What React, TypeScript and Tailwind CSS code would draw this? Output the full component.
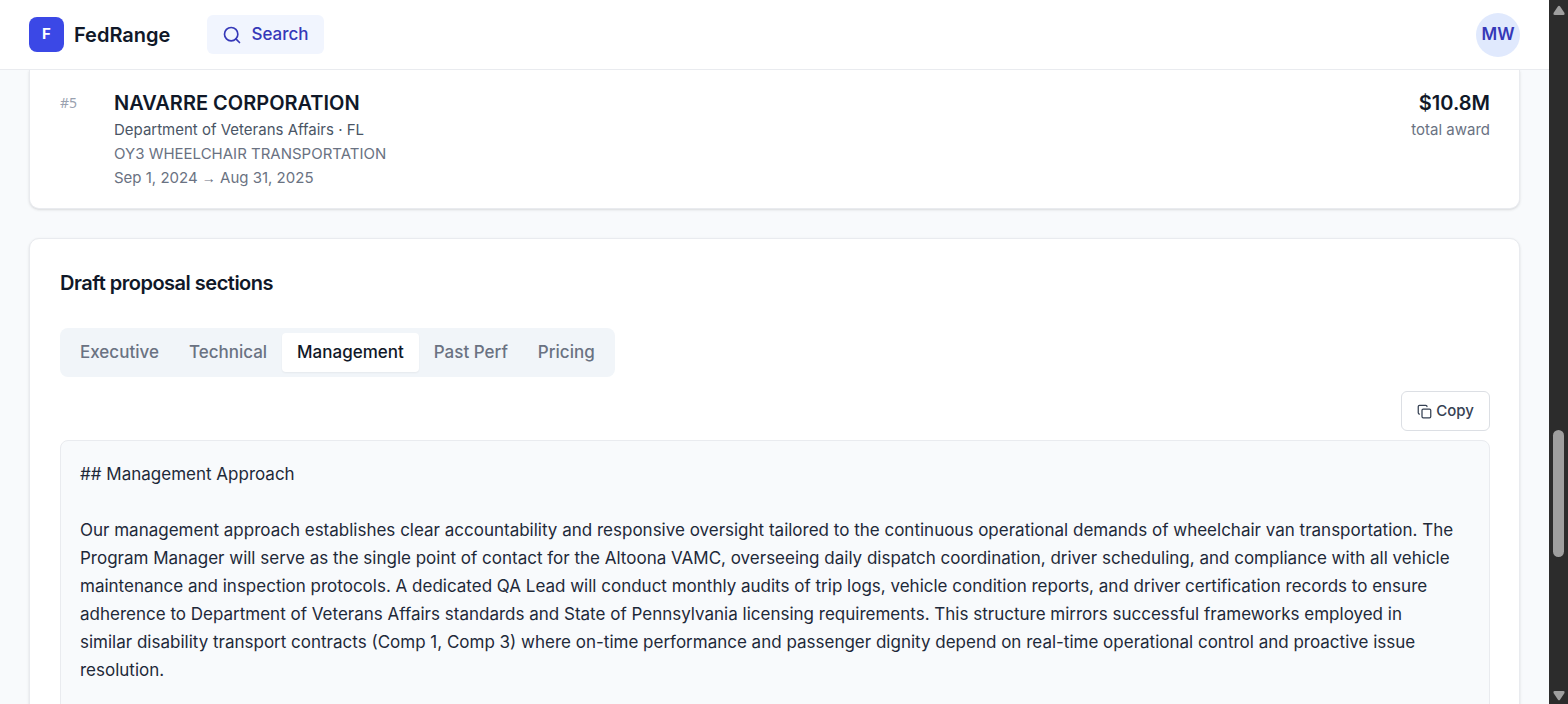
import { Copy, Search } from 'lucide-react';

const tabs = ['Executive', 'Technical', 'Management', 'Past Perf', 'Pricing'];
const activeTab = 'Management';

const draft = `## Management Approach

Our management approach establishes clear accountability and responsive oversight tailored to the continuous operational demands of wheelchair van transportation. The Program Manager will serve as the single point of contact for the Altoona VAMC, overseeing daily dispatch coordination, driver scheduling, and compliance with all vehicle maintenance and inspection protocols. A dedicated QA Lead will conduct monthly audits of trip logs, vehicle condition reports, and driver certification records to ensure adherence to Department of Veterans Affairs standards and State of Pennsylvania licensing requirements. This structure mirrors successful frameworks employed in similar disability transport contracts (Comp 1, Comp 3) where on-time performance and passenger dignity depend on real-time operational control and proactive issue resolution.`;

function Header() {
  return (
    <header className="flex h-[70px] shrink-0 items-center border-b border-[#e9ebef] bg-white px-[29px]">
      <a href="#home" className="flex items-center gap-2.5">
        <span className="flex size-[35px] items-center justify-center rounded-lg bg-[#3b48e6] text-[15px] font-bold text-white">
          F
        </span>
        <span className="text-xl leading-[26px] font-semibold text-gray-900">FedRange</span>
      </a>
      <nav className="ml-[37px]">
        <a
          href="#search"
          className="flex h-[39px] items-center gap-[9px] rounded-md bg-[#f1f5fe] px-[15px] text-[17px] font-medium text-[#3538b8]"
        >
          <Search className="size-5" strokeWidth={2} />
          Search
        </a>
      </nav>
      <button
        type="button"
        className="ml-auto flex size-11 items-center justify-center rounded-full bg-[#e0e9fd] text-[17px] font-semibold text-[#3538b8]"
      >
        MW
      </button>
    </header>
  );
}

function AwardCard() {
  return (
    <section className="flex rounded-b-[10px] border border-t-0 border-[#e9ebef] bg-white pt-5 pr-[29px] pb-[18px] pl-[30px] shadow-sm">
      <span className="w-[54px] shrink-0 pt-[3px] font-['Noto_Sans'] text-sm text-gray-400">#5</span>
      <div className="min-w-0 flex-1">
        <h3 className="text-xl leading-[26px] font-semibold text-gray-900">NAVARRE CORPORATION</h3>
        <p className="pt-0.5 text-[15px] leading-6 text-gray-600">Department of Veterans Affairs · FL</p>
        <p className="text-[15px] leading-6 text-gray-500">OY3 WHEELCHAIR TRANSPORTATION</p>
        <p className="text-[15px] leading-6 text-gray-500">
          Sep 1, 2024 <span className="font-['Liberation_Sans'] text-sm">→</span> Aug 31, 2025
        </p>
      </div>
      <div className="text-right">
        <p className="text-xl leading-[26px] font-semibold text-gray-900">$10.8M</p>
        <p className="pt-0.5 text-[15px] leading-6 text-gray-500">total award</p>
      </div>
    </section>
  );
}

function DraftSections() {
  return (
    <section className="rounded-[10px] border border-[#e9ebef] bg-white pt-[29px] pr-[29px] pb-[29px] pl-[30px] shadow-sm">
      <h2 className="text-xl leading-[30px] font-semibold tracking-tight text-gray-900">Draft proposal sections</h2>

      <div role="tablist" className="mt-[30px] flex h-[49px] w-fit items-center rounded-lg bg-slate-100 px-[5px]">
        {tabs.map((tab) => (
          <button
            key={tab}
            type="button"
            role="tab"
            aria-selected={tab === activeTab}
            className={
              tab === activeTab
                ? 'h-[39px] rounded-sm bg-white px-[15px] text-[17px] font-medium text-gray-900 shadow-xs'
                : 'h-[39px] rounded-sm px-[15px] text-[17px] font-medium text-gray-500'
            }
          >
            {tab}
          </button>
        ))}
      </div>

      <div className="mt-[14px] flex justify-end">
        <button
          type="button"
          className="flex h-10 items-center gap-1 rounded-md border border-[#dcdfe4] bg-white px-[15px] text-[15px] font-medium text-gray-700"
        >
          <Copy className="size-[15px]" strokeWidth={2} />
          Copy
        </button>
      </div>

      <div className="mt-[9px] min-h-[400px] rounded-lg border border-[#e9ebef] bg-slate-50 py-[19px] pr-[34px] pl-[19px] text-[17px] leading-7 whitespace-pre-wrap text-gray-800">
        {draft}
      </div>
    </section>
  );
}

function Scrollbar() {
  return (
    <div aria-hidden="true" className="flex w-[19px] shrink-0 flex-col items-center bg-[#2c2c2c] pt-[5px] pb-[3px]">
      <svg viewBox="0 0 12 10" className="h-2.5 w-3 fill-[#9f9f9f]">
        <path d="M5 1.2Q6 .2 7 1.2L11.5 8Q12 10 10.5 10H1.5Q0 10 .5 8Z" />
      </svg>
      <div className="flex w-full flex-1 flex-col items-center">
        <div className="grow-[415]" />
        <div className="w-[11px] grow-[127] rounded-full bg-[#9f9f9f]" />
        <div className="grow-[134]" />
      </div>
      <svg viewBox="0 0 12 10" className="h-2.5 w-3 fill-[#9f9f9f]">
        <path d="M5 8.8Q6 9.8 7 8.8L11.5 2Q12 0 10.5 0H1.5Q0 0 .5 2Z" />
      </svg>
    </div>
  );
}

export default function App() {
  return (
    <div className="flex h-screen overflow-hidden bg-slate-50 font-['Inter',sans-serif]">
      <div className="flex min-w-0 flex-1 flex-col">
        <Header />
        <main className="flex min-h-0 flex-1 flex-col gap-[29px] overflow-hidden px-[29px]">
          <div className="shrink-0">
            <AwardCard />
          </div>
          <div className="shrink-0">
            <DraftSections />
          </div>
        </main>
      </div>
      <Scrollbar />
    </div>
  );
}
